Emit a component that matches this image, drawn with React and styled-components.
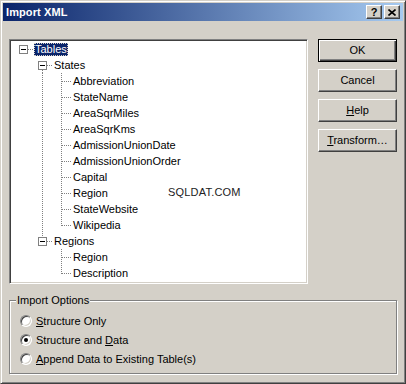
import React from 'react'
import styled, { createGlobalStyle } from 'styled-components'

const Global = createGlobalStyle`
  html, body {
    margin: 0;
    padding: 0;
    background: #D4D0C8;
  }
  body {
    font-family: "Liberation Sans", Arial, sans-serif;
    font-size: 11px;
    color: #000;
  }
`

const Window = styled.div`
  box-sizing: border-box;
  width: 406px;
  height: 384px;
  padding: 2px;
  background: #D4D0C8;
  border: 1px solid;
  border-color: #D4D0C8 #404040 #404040 #D4D0C8;
  box-shadow: inset 1px 1px 0 #fff, inset -1px -1px 0 #808080;
  display: flex;
  flex-direction: column;
`

const TitleBar = styled.div`
  height: 18px;
  display: flex;
  align-items: center;
  padding: 0 3px 0 3px;
  background: linear-gradient(to right, #0A246A, #A6CAF0);
`

const Title = styled.div`
  flex: 1;
  color: #fff;
  font-weight: bold;
  font-size: 11px;
  letter-spacing: 0.1px;
`

const CapButton = styled.div`
  box-sizing: border-box;
  width: 16px;
  height: 14px;
  margin-left: ${p => (p.gap ? '2px' : '0')};
  background: #D4D0C8;
  border: 1px solid;
  border-color: #fff #404040 #404040 #fff;
  box-shadow: inset -1px -1px 0 #808080;
  display: flex;
  align-items: center;
  justify-content: center;
  font-weight: bold;
  font-size: 11px;
  line-height: 11px;
`

const Body = styled.div`
  flex: 1;
  display: flex;
  flex-direction: column;
  padding: 18px 6px 0 6px;
`

const TopRow = styled.div`
  display: flex;
  align-items: flex-start;
`

const TreeBox = styled.div`
  position: relative;
  box-sizing: border-box;
  width: 299px;
  height: 245px;
  background: #fff;
  border: 1px solid;
  border-color: #808080 #fff #fff #808080;
  box-shadow: inset 1px 1px 0 #404040, inset -1px -1px 0 #D4D0C8;
  padding: 1px 0 0 4px;
  overflow: hidden;
`

const Row = styled.div`
  display: flex;
  align-items: center;
  height: 16px;
`

const Label = styled.span`
  display: inline-block;
  line-height: 13px;
  height: 13px;
  padding: 0 1px;
  margin-left: 1px;
  white-space: nowrap;
  color: ${p => (p.selected ? '#fff' : '#000')};
  background: ${p => (p.selected ? '#0A246A' : 'transparent')};
  outline: ${p => (p.selected ? '1px dotted #D4D0C8' : 'none')};
  outline-offset: -1px;
`

const Watermark = styled.div`
  position: absolute;
  left: 158px;
  top: 146px;
  color: #222;
  font-size: 11px;
  letter-spacing: 0.2px;
`

const ButtonColumn = styled.div`
  margin-left: 10px;
  display: flex;
  flex-direction: column;
  gap: 7px;
`

const Button = styled.div`
  box-sizing: border-box;
  width: 79px;
  height: 23px;
  display: flex;
  align-items: center;
  justify-content: center;
  background: #D4D0C8;
  border: 1px solid;
  border-color: ${p => (p.primary ? '#000' : '#fff #404040 #404040 #fff')};
  box-shadow: ${p =>
    p.primary
      ? 'inset 1px 1px 0 #fff, inset -1px -1px 0 #404040, inset -2px -2px 0 #808080'
      : 'inset -1px -1px 0 #808080'};
  padding-bottom: 1px;
`

const GroupBox = styled.div`
  position: relative;
  box-sizing: border-box;
  margin-top: 16px;
  width: 388px;
  height: 74px;
  border: 1px solid #808080;
  box-shadow: inset 1px 1px 0 #fff, 1px 1px 0 #fff;
  padding: 10px 0 0 10px;
`

const GroupLabel = styled.div`
  position: absolute;
  top: -7px;
  left: 6px;
  padding: 0 1px;
  line-height: 13px;
  background: #D4D0C8;
`

const RadioRow = styled.div`
  display: flex;
  align-items: center;
  height: 19px;
`

const RadioCircle = styled.div`
  box-sizing: border-box;
  width: 12px;
  height: 12px;
  border-radius: 50%;
  background: #fff;
  border: 1px solid;
  border-color: #808080 #fff #fff #808080;
  box-shadow: inset 1px 1px 0 #404040, inset -1px -1px 0 #D4D0C8;
  display: flex;
  align-items: center;
  justify-content: center;
  &::after {
    content: '';
    width: 4px;
    height: 4px;
    border-radius: 50%;
    background: ${p => (p.checked ? '#000' : 'transparent')};
  }
`

const RadioText = styled.span`
  margin-left: 4px;
`

const U = styled.span`
  text-decoration: underline;
  text-underline-offset: 1px;
`

const dots = { stroke: '#808080', strokeWidth: 1, strokeDasharray: '1 1', shapeRendering: 'crispEdges' }

function Guide({ kind }) {
  const cx = 9.5
  return (
    <svg width="19" height="16" style={{ flex: 'none', display: 'block' }}>
      {kind === 'pipe' && <line x1={cx} y1="0" x2={cx} y2="16" {...dots} />}
      {(kind === 'tee' || kind === 'ell') && (
        <>
          <line x1={cx} y1="0" x2={cx} y2={kind === 'tee' ? 16 : 9} {...dots} />
          <line x1={cx} y1="8.5" x2="19" y2="8.5" {...dots} />
        </>
      )}
      {kind.startsWith('box') && (
        <>
          {kind === 'boxDown' && <line x1={cx} y1="13" x2={cx} y2="16" {...dots} />}
          {kind === 'boxUp' && <line x1={cx} y1="0" x2={cx} y2="4" {...dots} />}
          <line x1="14" y1="8.5" x2="19" y2="8.5" {...dots} />
          <rect x="5.5" y="4.5" width="8" height="8" fill="#fff" stroke="#808080" shapeRendering="crispEdges" />
          <line x1="7" y1="8.5" x2="12" y2="8.5" stroke="#000" shapeRendering="crispEdges" />
        </>
      )}
    </svg>
  )
}

const stateFields = [
  'Abbreviation',
  'StateName',
  'AreaSqrMiles',
  'AreaSqrKms',
  'AdmissionUnionDate',
  'AdmissionUnionOrder',
  'Capital',
  'Region',
  'StateWebsite',
  'Wikipedia',
]

const rows = [
  { label: 'Tables', cells: ['box'], selected: true },
  { label: 'States', cells: ['blank', 'boxDown'] },
  ...stateFields.map((f, i) => ({
    label: f,
    cells: ['blank', 'pipe', i === stateFields.length - 1 ? 'ell' : 'tee'],
  })),
  { label: 'Regions', cells: ['blank', 'boxUp'] },
  { label: 'Region', cells: ['blank', 'blank', 'tee'] },
  { label: 'Description', cells: ['blank', 'blank', 'ell'] },
]

function CloseGlyph() {
  return (
    <svg width="8" height="7" viewBox="0 0 8 7">
      <path d="M0.5 0.5 L7.5 6.5 M7.5 0.5 L0.5 6.5" stroke="#000" strokeWidth="1.6" />
    </svg>
  )
}

export default function App() {
  return (
    <>
      <Global />
      <Window>
        <TitleBar>
          <Title>Import XML</Title>
          <CapButton>?</CapButton>
          <CapButton gap>
            <CloseGlyph />
          </CapButton>
        </TitleBar>
        <Body>
          <TopRow>
            <TreeBox>
              {rows.map((r, i) => (
                <Row key={i}>
                  {r.cells.map((c, j) => (
                    <Guide key={j} kind={c} />
                  ))}
                  <Label selected={r.selected}>{r.label}</Label>
                </Row>
              ))}
              <Watermark>SQLDAT.COM</Watermark>
            </TreeBox>
            <ButtonColumn>
              <Button primary>OK</Button>
              <Button>Cancel</Button>
              <Button>
                <span><U>H</U>elp</span>
              </Button>
              <Button>
                <span><U>T</U>ransform…</span>
              </Button>
            </ButtonColumn>
          </TopRow>
          <GroupBox>
            <GroupLabel>Import Options</GroupLabel>
            <RadioRow>
              <RadioCircle />
              <RadioText><U>S</U>tructure Only</RadioText>
            </RadioRow>
            <RadioRow>
              <RadioCircle checked />
              <RadioText>Structure and <U>D</U>ata</RadioText>
            </RadioRow>
            <RadioRow>
              <RadioCircle />
              <RadioText><U>A</U>ppend Data to Existing Table(s)</RadioText>
            </RadioRow>
          </GroupBox>
        </Body>
      </Window>
    </>
  )
}
